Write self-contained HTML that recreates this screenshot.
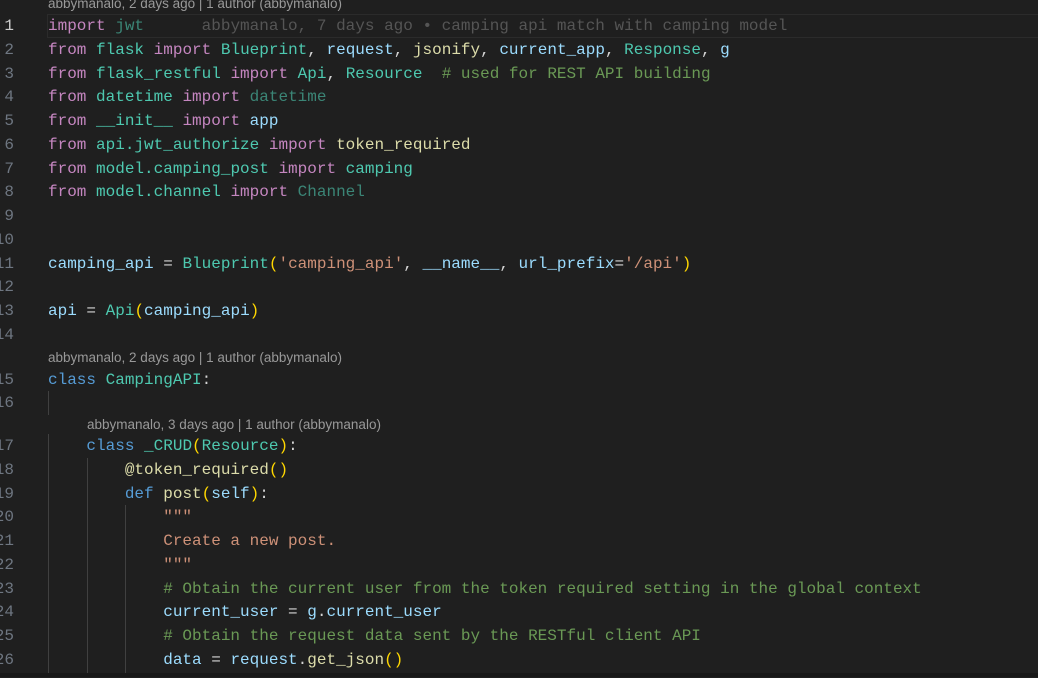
<!DOCTYPE html>
<html><head><meta charset="utf-8"><style>
body{margin:0;background:#1f1f1f;width:1038px;height:677px;overflow:hidden;position:relative;font-family:"Liberation Mono",monospace;font-size:16px}
#w{position:absolute;left:0;top:1px;width:1038px;height:677px}
.r{position:absolute;left:0;height:24px;line-height:24px;white-space:pre;color:#d4d4d4}
.n{position:absolute;left:-6px;width:20px;text-align:right;color:#6e7681}
.c{position:absolute;left:48px}
.cl{position:absolute;font-family:"Liberation Sans",sans-serif;font-size:13.5px;color:#999;white-space:pre;height:20px;line-height:20px}
.k{color:#c586c0}.b{color:#569cd6}.t{color:#4ec9b0}.v{color:#9cdcfe}.f{color:#dcdcaa}.s{color:#ce9178}.m{color:#6a9955}.y{color:#ffd700}.d{opacity:.6}
.g{position:absolute;width:1px;background:#404040}
</style></head><body><div id="w">
<div style="position:absolute;left:47px;top:13px;width:991px;height:22px;border:1px solid #2b2b2b;border-right:none"></div>
<div class="cl" style="left:48px;top:-7px">abbymanalo, 2 days ago | 1 author (abbymanalo)</div>
<div class="r" style="top:13px"><span class="n" style="color:#ccc">1</span><span class="c"><span class="k">import</span> <span class="t d">jwt</span>      <span style="color:#555">abbymanalo, 7 days ago • camping api match with camping model</span></span></div>
<div class="r" style="top:37px"><span class="n">2</span><span class="c"><span class="k">from</span> <span class="t">flask</span> <span class="k">import</span> <span class="t">Blueprint</span>, <span class="v">request</span>, <span class="f">jsonify</span>, <span class="v">current_app</span>, <span class="t">Response</span>, <span class="v">g</span></span></div>
<div class="r" style="top:61px"><span class="n">3</span><span class="c"><span class="k">from</span> <span class="t">flask_restful</span> <span class="k">import</span> <span class="t">Api</span>, <span class="t">Resource</span>  <span class="m"># used for REST API building</span></span></div>
<div class="r" style="top:84px"><span class="n">4</span><span class="c"><span class="k">from</span> <span class="t">datetime</span> <span class="k">import</span> <span class="t d">datetime</span></span></div>
<div class="r" style="top:108px"><span class="n">5</span><span class="c"><span class="k">from</span> <span class="t">__init__</span> <span class="k">import</span> <span class="v">app</span></span></div>
<div class="r" style="top:132px"><span class="n">6</span><span class="c"><span class="k">from</span> <span class="t">api.jwt_authorize</span> <span class="k">import</span> <span class="f">token_required</span></span></div>
<div class="r" style="top:156px"><span class="n">7</span><span class="c"><span class="k">from</span> <span class="t">model.camping_post</span> <span class="k">import</span> <span class="t">camping</span></span></div>
<div class="r" style="top:179px"><span class="n">8</span><span class="c"><span class="k">from</span> <span class="t">model.channel</span> <span class="k">import</span> <span class="t d">Channel</span></span></div>
<div class="r" style="top:203px"><span class="n">9</span></div>
<div class="r" style="top:227px"><span class="n">10</span></div>
<div class="r" style="top:251px"><span class="n">11</span><span class="c"><span class="v">camping_api</span> = <span class="t">Blueprint</span><span class="y">(</span><span class="s">'camping_api'</span>, <span class="v">__name__</span>, <span class="v">url_prefix</span>=<span class="s">'/api'</span><span class="y">)</span></span></div>
<div class="r" style="top:274px"><span class="n">12</span></div>
<div class="r" style="top:298px"><span class="n">13</span><span class="c"><span class="v">api</span> = <span class="t">Api</span><span class="y">(</span><span class="v">camping_api</span><span class="y">)</span></span></div>
<div class="r" style="top:322px"><span class="n">14</span></div>
<div class="cl" style="left:48px;top:347px">abbymanalo, 2 days ago | 1 author (abbymanalo)</div>
<div class="r" style="top:367px"><span class="n">15</span><span class="c"><span class="b">class</span> <span class="t">CampingAPI</span>:</span></div>
<div class="r" style="top:390px"><span class="n">16</span></div>
<div class="cl" style="left:87px;top:414px">abbymanalo, 3 days ago | 1 author (abbymanalo)</div>
<div class="r" style="top:433px"><span class="n">17</span><span class="c">    <span class="b">class</span> <span class="t">_CRUD</span><span class="y">(</span><span class="t">Resource</span><span class="y">)</span>:</span></div>
<div class="r" style="top:457px"><span class="n">18</span><span class="c">        <span class="f">@token_required</span><span class="y">()</span></span></div>
<div class="r" style="top:481px"><span class="n">19</span><span class="c">        <span class="b">def</span> <span class="f">post</span><span class="y">(</span><span class="v">self</span><span class="y">)</span>:</span></div>
<div class="r" style="top:504px"><span class="n">20</span><span class="c">            <span class="s">"""</span></span></div>
<div class="r" style="top:528px"><span class="n">21</span><span class="c">            <span class="s">Create a new post.</span></span></div>
<div class="r" style="top:552px"><span class="n">22</span><span class="c">            <span class="s">"""</span></span></div>
<div class="r" style="top:576px"><span class="n">23</span><span class="c">            <span class="m"># Obtain the current user from the token required setting in the global context</span></span></div>
<div class="r" style="top:599px"><span class="n">24</span><span class="c">            <span class="v">current_user</span> = <span class="v">g</span>.<span class="v">current_user</span></span></div>
<div class="r" style="top:623px"><span class="n">25</span><span class="c">            <span class="m"># Obtain the request data sent by the RESTful client API</span></span></div>
<div class="r" style="top:647px"><span class="n">26</span><span class="c">            <span class="v">data</span> = <span class="v">request</span>.<span class="f">get_json</span><span class="y">()</span></span></div>
<div class="g" style="left:48px;top:390px;height:24px"></div>
<div class="g" style="left:48px;top:433px;height:240px"></div>
<div class="g" style="left:87px;top:457px;height:216px"></div>
<div class="g" style="left:125px;top:504px;height:169px"></div>
</div>
<div style="position:absolute;left:0;top:673px;width:1038px;height:4px;background:#181818"></div>
</body></html>
